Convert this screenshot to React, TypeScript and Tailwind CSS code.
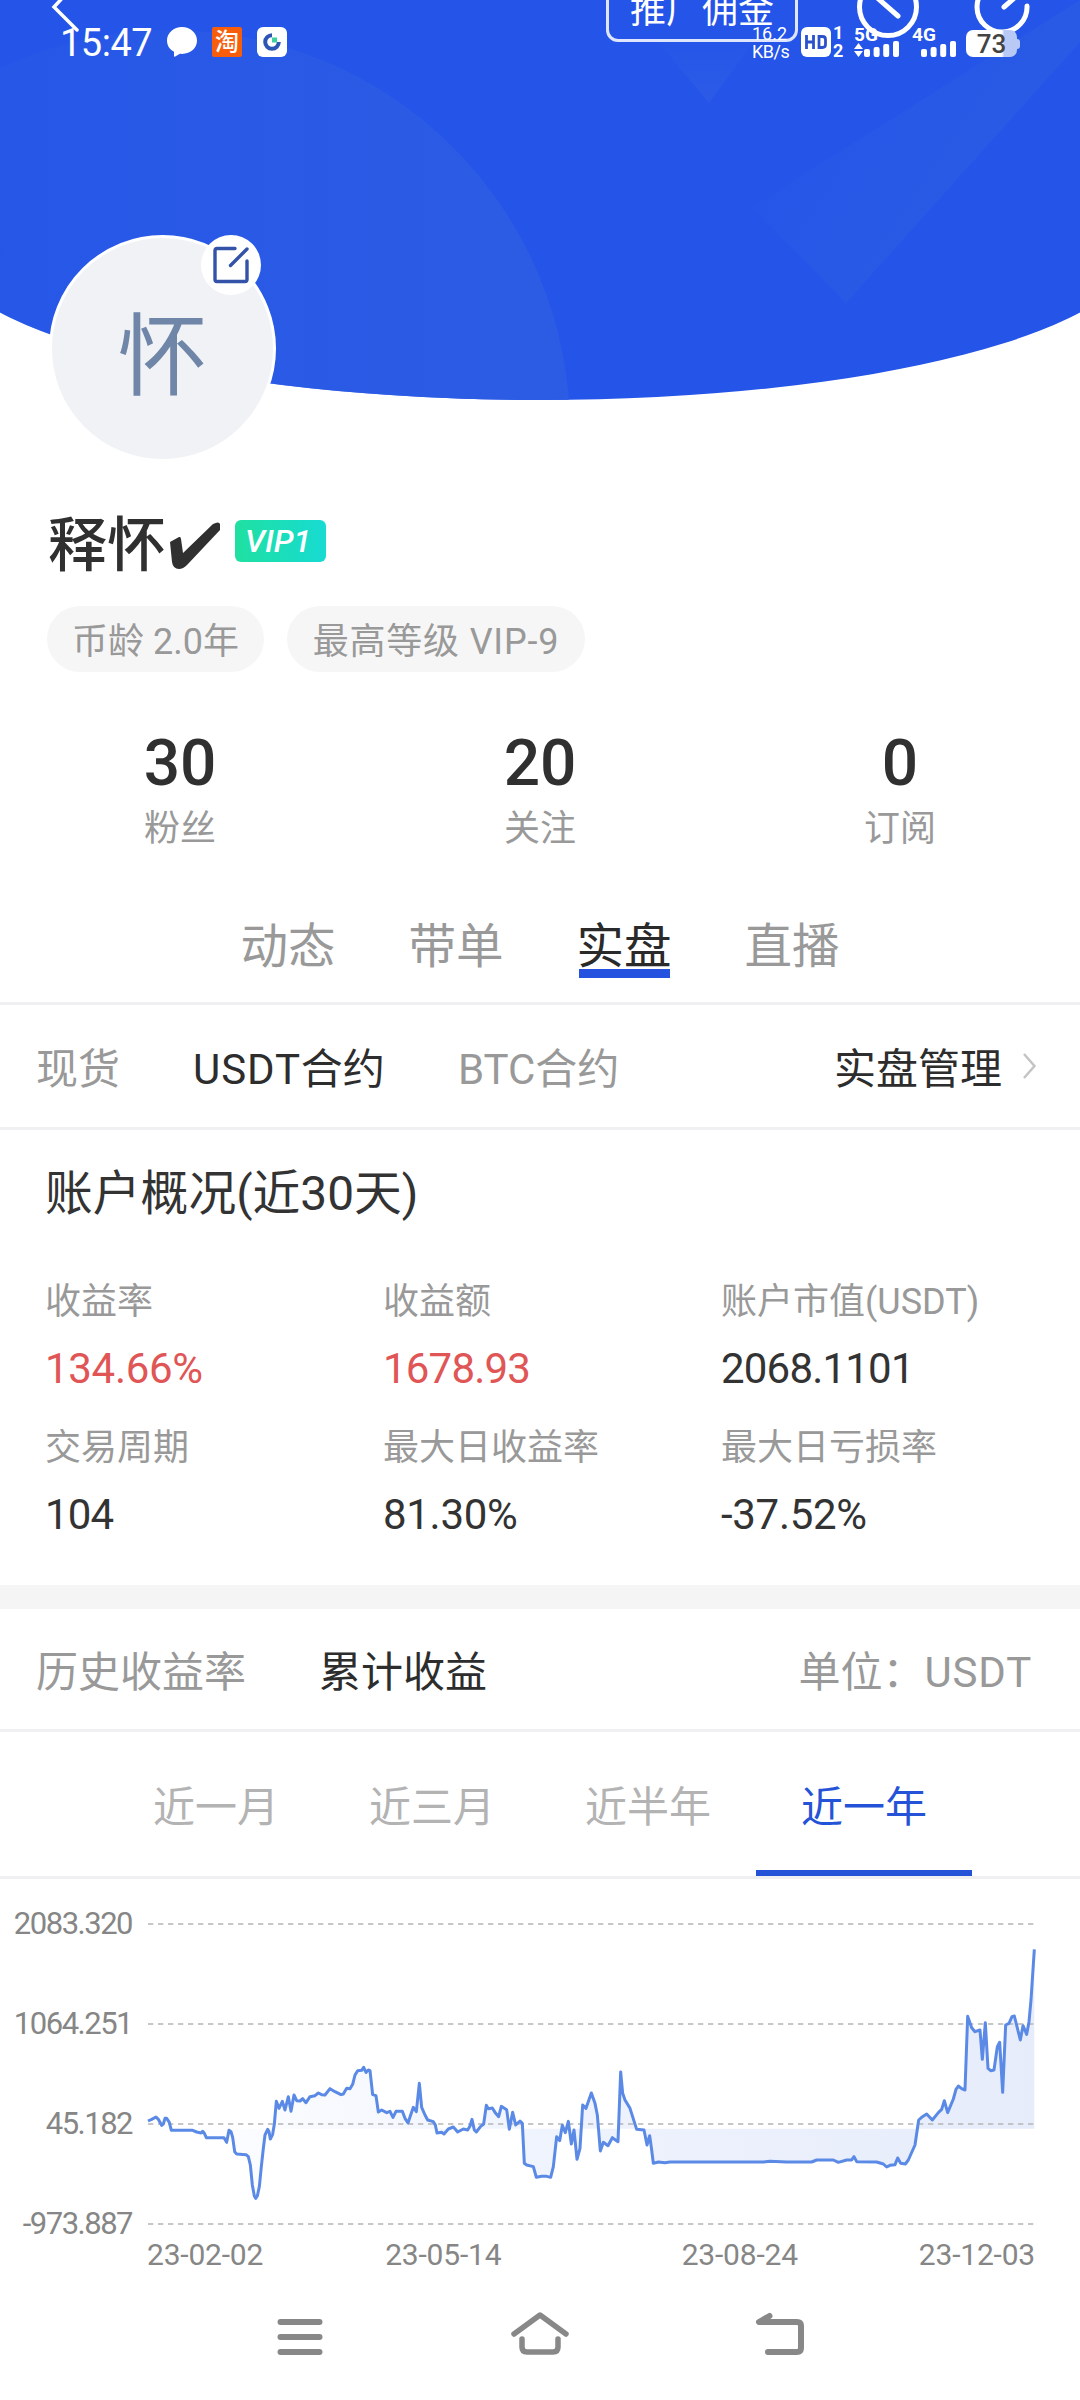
const stats = [
  { value: "30", label: "粉丝" },
  { value: "20", label: "关注" },
  { value: "0", label: "订阅" },
];

const tabs = ["动态", "带单", "实盘", "直播"];

const overview = [
  { label: "收益率", value: "134.66%", red: true },
  { label: "收益额", value: "1678.93", red: true },
  { label: "账户市值(USDT)", value: "2068.1101" },
  { label: "交易周期", value: "104" },
  { label: "最大日收益率", value: "81.30%" },
  { label: "最大日亏损率", value: "-37.52%" },
];

const ranges = ["近一月", "近三月", "近半年", "近一年"];

const yLabels = ["2083.320", "1064.251", "45.182", "-973.887"];

// Cumulative profit curve, three units per pixel
const profitLine = [
  {
    start: 0,
    points:
      "444,663 455,658 468,651 475,658 485,676 490,672 495,655 500,655 508,667 514,691 578,691 590,696 603,699 608,694 613,700 619,713 672,713 680,727 687,691 693,695 698,712 704,755 710,762 738,764 745,770 751,795 757,855 763,888 767,895 772,888 778,860 784,800 790,745 795,705 803,688 807,695 811,717 818,703 823,672 829,604 837,625 847,604 855,630 865,590 873,634 882,585 890,602 900,603 908,596 918,608 930,590 945,587 955,579 965,584 975,585 990,566 1005,575 1023,584 1030,582 1040,565 1050,566 1058,553 1065,525 1073,512 1085,511 1091,502 1098,517 1105,510",
  },
  {
    start: 1110,
    points:
      "0,512 8,584 18,587 25,636 35,630 50,638 60,634 69,652 78,634 97,634 105,655 114,669 122,645 130,622 139,635 148,550 155,622 165,645 173,660 190,665 196,675 201,699 215,697 222,702 235,687 250,681 263,696 280,687 293,690 300,678 306,658 313,690 319,696 332,679 341,672 349,616 355,626 367,624 377,640 386,650 394,619 410,629 418,688 428,637 437,675 450,663 457,670 463,790 470,795 490,800 499,832 515,829 530,829 542,832 550,800 560,710 569,722 577,676 586,698 595,664 604,732 612,690 621,778 630,745 638,615 648,625 664,579 675,610 682,645 691,753 700,727 714,737 727,713 744,725 752,516 758,580 765,600 780,625 800,688 822,690 831,735 839,707 845,750 850,790 865,786 885,788 900,786",
  },
  {
    start: 2160,
    points:
      "0,786 130,786 150,784 200,786 275,786 290,780 340,780 355,787 380,780 395,780 402,770 410,785 470,786 490,792 500,801 510,796 525,794 533,774 542,790 556,792 565,780 585,735 596,660 605,652 620,642 637,660 655,638 665,628 673,602 683,638 700,597 708,568 715,558 725,566 735,570 743,349 755,383 765,395 780,390 787,478 796,368 804,505 812,512 822,510 832,440 839,427 848,577 857,375 867,370 876,350 883,348 901,420 909,377 920,403 927,365 933,300 943,148",
  },
]
  .flatMap(({ start, points }) =>
    points.split(" ").map((p) => {
      const [x, y] = p.split(",").map(Number);
      return `${x + start},${y}`;
    }),
  )
  .join(" ");

function SignalBars() {
  return (
    <svg width="36" height="16" viewBox="0 0 36 16" fill="#fff">
      <rect x="0" y="8" width="6" height="8" rx="2" />
      <rect x="9.6" y="6" width="6" height="10" rx="2" />
      <rect x="19.2" y="3" width="6" height="13" rx="2" />
      <rect x="29" y="0" width="6" height="16" rx="2" />
    </svg>
  );
}

function StatusBar() {
  return (
    <div className="absolute inset-x-0 top-0 flex h-[84px] items-center pl-[60px] pr-[60px] text-white">
      <span className="w-[94px] pt-[2px] text-[38px] leading-none tracking-[-0.5px]">15:47</span>
      <svg className="ml-[13px]" width="30" height="30" viewBox="0 0 30 30" fill="#fff">
        <path d="M15 0C6.700 0 0 6 0 13.500c0 5 2.700 9 7 11.300V29c0 .8.600 1 1.200.6L13 26.800c10 .9 17-5.300 17-13.300C30 6 23.300 0 15 0z" />
      </svg>
      <span className="ml-[15px] flex size-[30px] items-center justify-center rounded-[2px] bg-[#f85d0c] text-[24px] font-medium leading-none">
        淘
      </span>
      <span className="ml-[15px] flex size-[30px] items-center justify-center rounded-[6px] bg-white">
        <svg width="18" height="18" viewBox="0 0 18 18" fill="none">
          <path d="M9 2.200a6.800 6.800 0 1 0 6.800 6.800" stroke="#2d55b4" strokeWidth="4" />
          <rect x="9" y="4.500" width="5" height="5" fill="#3fd0a0" />
        </svg>
      </span>

      <div className="ml-auto flex h-[30px] items-end">
        <div className="flex w-[36px] flex-col justify-between self-stretch text-[18px] leading-none">
          <span className="-mt-[2px]">16.2</span>
          <span className="-mb-[3px] tracking-[-0.5px]">KB/s</span>
        </div>
        <svg className="ml-[13px]" width="30" height="30" viewBox="0 0 30 30">
          <rect width="30" height="30" rx="6" fill="#fff" />
          <path d="M5.500 8v14M12.500 8v14M5.500 15h7M18 9.500v11h3.500q3 0 3-3v-5q0-3-3-3z" fill="none" stroke="#2b52cc" strokeWidth="2.800" />
        </svg>
        <div className="ml-[2px] flex w-[11px] flex-col justify-between self-stretch text-[18px] font-bold leading-none">
          <span className="-mt-[3px]">1</span>
          <span className="-mb-[3px]">2</span>
        </div>
        <div className="relative ml-[10px] h-[30px] w-[46px]">
          <span className="absolute -top-[2px] left-0 text-[19px] font-bold leading-none">5G</span>
          <svg className="absolute bottom-0 left-0" width="9" height="14" viewBox="0 0 9 14" fill="#fff">
            <path d="M4.500 0 9 6H0zM4.500 14 0 8h9z" />
          </svg>
          <div className="absolute bottom-0 left-[10px]">
            <SignalBars />
          </div>
        </div>
        <div className="relative ml-[12px] h-[30px] w-[46px]">
          <span className="absolute -top-[2px] left-0 text-[19px] font-bold leading-none">4G</span>
          <div className="absolute bottom-0 left-[9px]">
            <SignalBars />
          </div>
        </div>
        <div className="ml-[8px] flex items-center">
          <div className="flex h-[27px] w-[51px] items-center justify-center rounded-[7px] bg-linear-to-r from-white from-70% to-[#b9c9f6] to-75% text-[26px] font-medium leading-none text-[#444]">
            73
          </div>
          <div className="h-[10px] w-[3px] rounded-r-sm bg-[#b9c9f6]" />
        </div>
      </div>
    </div>
  );
}

function Header() {
  return (
    <header className="relative h-[400px] shrink-0 overflow-hidden">
      <div className="-mx-[60px] h-[400px] overflow-hidden rounded-b-[50%_155px] bg-[#2454e8] px-[60px]">
        <svg width="1080" height="400" viewBox="0 0 1080 400">
          <defs>
            <linearGradient id="disc" x1="0" y1="0" x2="1" y2="0">
              <stop offset="0.250" stopColor="#2b5ce5" stopOpacity="0.300" />
              <stop offset="0.900" stopColor="#2c5ce4" />
            </linearGradient>
            <linearGradient id="beam" x1="770" y1="120" x2="930" y2="225" gradientUnits="userSpaceOnUse">
              <stop offset="0" stopColor="#2455e8" />
              <stop offset="1" stopColor="#295ae5" />
            </linearGradient>
            <linearGradient id="tip" x1="0" y1="1" x2="0" y2="0">
              <stop offset="0" stopColor="#2b5be6" />
              <stop offset="1" stopColor="#2454e8" />
            </linearGradient>
          </defs>
          <circle cx="170" cy="430" r="400" fill="url(#disc)" />
          <path d="M709 103 640 20H770z" fill="url(#tip)" />
          <path d="M846 303 752 207 1080 0V42z" fill="url(#beam)" />
        </svg>
      </div>
      <svg className="absolute left-0 top-0" width="1080" height="60" viewBox="0 0 1080 60" fill="none" stroke="#fff" strokeLinecap="round">
        <path d="M66-6 54 7 77 30" strokeWidth="3.500" />
        <circle cx="888" cy="7" r="28.500" strokeWidth="5" />
        <path d="m874-5 24 21" strokeWidth="5" />
        <path d="M1027 6a25 25 0 1 1-25-24M1004 7l16-14" strokeWidth="5" />
      </svg>
      <div className="absolute -top-[30px] left-[606px] flex h-[72px] w-[192px] items-end justify-center rounded-[12px] border-3 border-white/85 pb-[8px] text-[36px] leading-[40px] text-white">
        推广佣金
      </div>
      <StatusBar />
    </header>
  );
}

function Profile() {
  return (
    <section className="relative -mt-[165px]">
      <div className="relative ml-[49px] flex size-[227px] items-center justify-center rounded-full border-3 border-white bg-[#f0f2f5] pt-[19px] text-[90px] leading-none text-[#6f86a8]">
        怀
        <span className="absolute -top-[3px] right-[12px] flex size-[60px] items-center justify-center rounded-full bg-white">
          <svg width="38" height="38" viewBox="0 0 38 38" fill="none" stroke="#3453a8" strokeWidth="3.400" strokeLinecap="round" strokeLinejoin="round">
            <path d="M23 2.500H5q-2 0-2 2v29q0 2 2 2h28q2 0 2-2V15M18.500 19.500 35 3" />
          </svg>
        </span>
      </div>

      <div className="ml-[48px] mt-[41px] flex h-[80px] items-center">
        <h1 className="pt-[4px] text-[59px] font-medium leading-none text-[#303030]">释怀</h1>
        <svg className="ml-[4px] mt-[5px]" width="50" height="48" viewBox="0 0 50 48" fill="#303030">
          <path d="M0 20 9 15q2-.5 2 2l2 14L43 2q6-3 7 0v6L17 43q-4 4-8 4-6 0-7-7z" />
        </svg>
        <span className="-mt-[4px] ml-[15px] flex h-[42px] w-[91px] items-center justify-center rounded-[6px] bg-linear-to-r from-[#20e0a0] to-[#18dbd2] pr-[5px] text-[32px] font-medium italic leading-none text-white">
          VIP1
        </span>
      </div>

      <div className="ml-[47px] mt-[23px] flex gap-[23px] text-[36px] leading-none text-[#999]">
        <span className="flex h-[66px] w-[217px] items-center justify-center rounded-full bg-[#f6f6f6] pt-[5px]">币龄 2.0年</span>
        <span className="flex h-[66px] w-[298px] items-center justify-center rounded-full bg-[#f6f6f6] pt-[5px] tracking-[0.8px]">
          最高等级 VIP-9
        </span>
      </div>

      <div className="mt-[57px] grid grid-cols-3 text-center">
        {stats.map((item) => (
          <div key={item.label}>
            <p className="text-[64px] font-medium leading-[70px] text-[#303030]">{item.value}</p>
            <p className="mt-[10px] text-[36px] leading-[40px] text-[#999]">{item.label}</p>
          </div>
        ))}
      </div>
    </section>
  );
}

export default function App() {
  return (
    <main className="flex h-[2400px] w-[1080px] flex-col overflow-hidden bg-white font-['Roboto','Noto_Sans_CJK_SC',sans-serif]">
      <Header />
      <Profile />

      <nav className="flex h-[153px] justify-center gap-[73px] pt-[71px]">
        {tabs.map((tab) => (
          <div key={tab} className={tab === "实盘" ? "text-[#2a2a2a]" : "text-[#999]"}>
            <p className="h-[49px] text-[47.500px] leading-[54px]">{tab}</p>
            {tab === "实盘" && <div className="mx-[2px] h-[9px] bg-[#2553e0]" />}
          </div>
        ))}
      </nav>

      <div className="flex h-[128px] items-center border-y-3 border-[#f0f0f2] pl-[36px] pr-[43px] pt-[8px] text-[42px] leading-none text-[#999]">
        <span>现货</span>
        <span className="ml-[73px] text-[#2d2d2d]">
          <span className="tracking-[0.9px]">USDT</span>合约
        </span>
        <span className="ml-[73px]">BTC合约</span>
        <span className="ml-auto text-[#2d2d2d]">实盘管理</span>
        <svg className="-mt-[8px] ml-[20px]" width="15" height="28" viewBox="0 0 15 28" fill="none" stroke="#c4c4c4" strokeWidth="2.500">
          <path d="M2 2 12.500 14 2 26" />
        </svg>
      </div>

      <section className="pt-[38px]">
        <h2 className="pl-[45px] text-[47.800px] leading-[52px] text-[#333]">账户概况(近30天)</h2>
        <div className="mt-[60px] grid grid-cols-[338px_338px_1fr] gap-y-[32px] pl-[45px]">
          {overview.map((item) => (
            <div key={item.label}>
              <p className="text-[36px] leading-[44px] text-[#999]">{item.label}</p>
              <p
                className={`mt-[20px] text-[42px] leading-[50px] ${item.value.endsWith("%") ? "tracking-[-0.300px]" : "tracking-[-0.8px]"} ${item.red ? "text-[#e05555]" : "text-[#333]"}`}
              >
                {item.value}
              </p>
            </div>
          ))}
        </div>
      </section>

      <div className="mt-[45px] h-[24px] shrink-0 bg-[#f5f5f5]" />

      <div className="flex h-[123px] shrink-0 items-center border-b-3 border-[#f0f0f2] pl-[36px] pr-[48px] pt-[7px] text-[42px] leading-none text-[#999]">
        <span>历史收益率</span>
        <span className="ml-[73px] text-[#2d2d2d]">累计收益</span>
        <span className="ml-auto">
          单位：<span className="tracking-[0.8px]">USDT</span>
        </span>
      </div>

      <div className="grid h-[147px] shrink-0 grid-cols-4 border-b-3 border-[#f0f0f2] px-[108px] text-center text-[42px] text-[#b3b3b3]">
        {ranges.map((range) => (
          <span
            key={range}
            className={`pt-[51px] leading-[50px] ${range === "近一年" ? "border-b-6 border-[#2553d8] text-[#2553d8]" : ""}`}
          >
            {range}
          </span>
        ))}
      </div>

      <section className="relative h-[400px] shrink-0">
        <div className="flex w-[132px] flex-col gap-[60px] pt-[25px] text-right text-[31px] leading-[40px] tracking-[-1.500px] text-[#868686]">
          {yLabels.map((label) => (
            <span key={label}>{label}</span>
          ))}
        </div>
        <svg className="absolute left-0 top-[21px]" width="1080" height="340" viewBox="0 0 3240 1020" fill="none">
          <defs>
            <linearGradient id="fill" x1="444" y1="0" x2="3103" y2="0" gradientUnits="userSpaceOnUse">
              <stop offset="0" stopColor="#e8eefc" stopOpacity="0" />
              <stop offset="0.500" stopColor="#e9effc" stopOpacity="0.800" />
              <stop offset="1" stopColor="#e7ecfb" />
            </linearGradient>
          </defs>
          <polygon points={`444,686 ${profitLine} 3103,686`} fill="url(#fill)" />
          {[72, 372, 672, 972].map((y) => (
            <path key={y} d={`M444 ${y}H3103`} stroke="#b5b5b5" strokeWidth="5" strokeDasharray="16 14" />
          ))}
          <polyline points={profitLine} stroke="#5a8ae6" strokeWidth="9" strokeLinejoin="round" />
        </svg>
        <div className="-mt-[9px] ml-[147px] flex w-[888px] text-[30px] leading-[40px] tracking-[-0.200px] text-[#868686]">
          <span>23-02-02</span>
          <span className="ml-[122px]">23-05-14</span>
          <span className="ml-auto">23-08-24</span>
          <span className="ml-[121px]">23-12-03</span>
        </div>
      </section>

      <nav className="flex justify-center gap-[180px] pt-[28px]">
        <svg width="60" height="60" viewBox="0 0 60 60" fill="none" stroke="#888" strokeWidth="6" strokeLinecap="round">
          <path d="M10.500 15h39M10.500 30h39M10.500 45h39" />
        </svg>
        <svg width="60" height="60" viewBox="0 0 60 60" fill="none" stroke="#888" strokeWidth="5.500" strokeLinecap="round" strokeLinejoin="round">
          <path d="M4 27 30 8l26 19M12 32v8q0 5 5 5h26q5 0 5-5v-8" />
        </svg>
        <svg width="60" height="60" viewBox="0 0 60 60" fill="none" stroke="#888" strokeWidth="6" strokeLinecap="round" strokeLinejoin="round">
          <path d="M19.500 9 9 15h38q4 0 4 4v22q0 4-4 4H18" />
        </svg>
      </nav>
    </main>
  );
}
